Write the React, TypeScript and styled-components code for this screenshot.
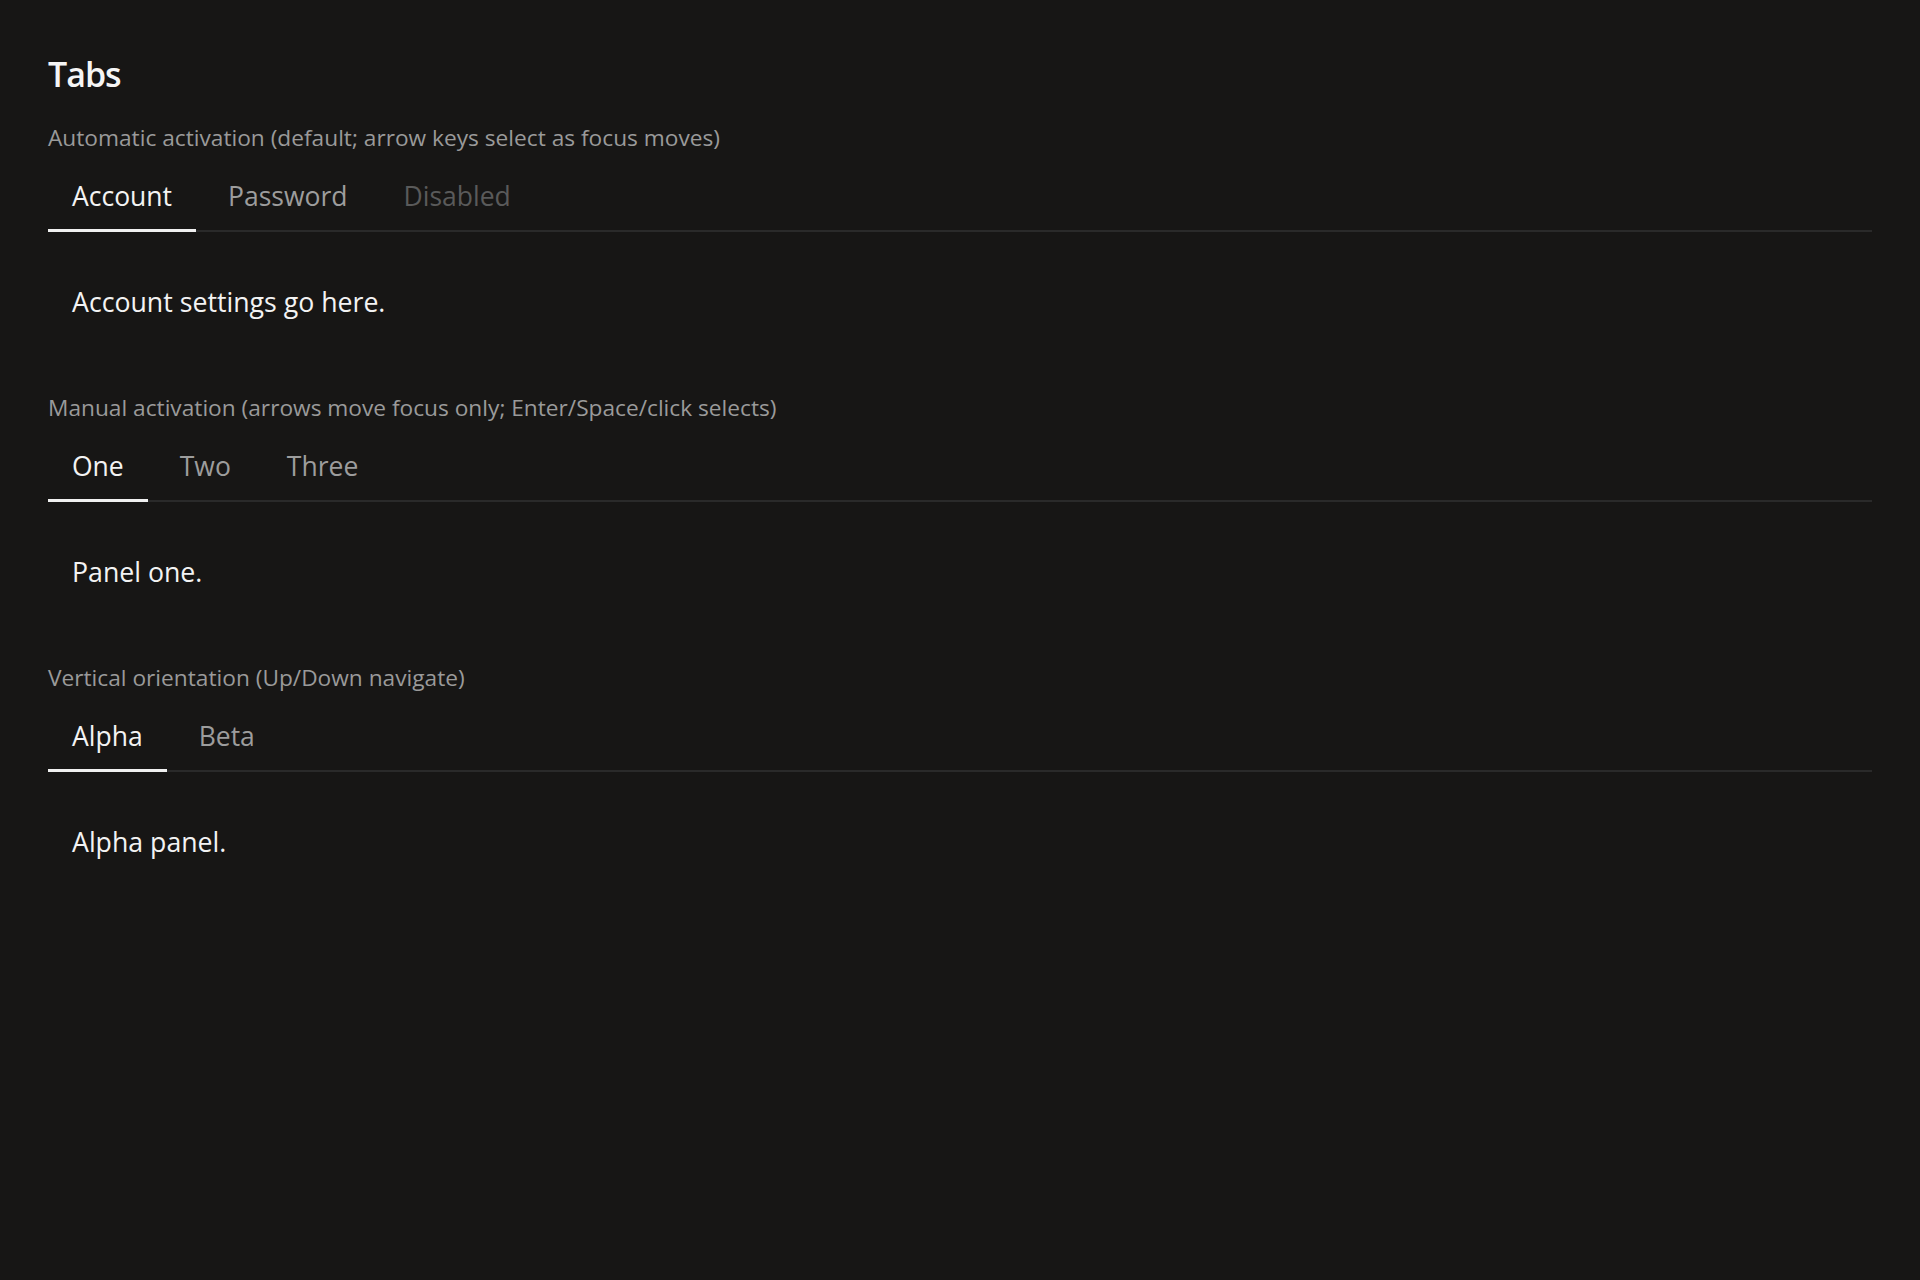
import { useState } from "react";
import styled, { createGlobalStyle } from "styled-components";
import * as Tabs from "@radix-ui/react-tabs";

type TabItem = { value: string; label: string; content: string; disabled?: boolean };

type Demo = {
  caption: string;
  manual?: boolean;
  vertical?: boolean;
  items: TabItem[];
};

const demos: Demo[] = [
  {
    caption: "Automatic activation (default; arrow keys select as focus moves)",
    items: [
      { value: "account", label: "Account", content: "Account settings go here." },
      { value: "password", label: "Password", content: "Change your password here." },
      { value: "disabled", label: "Disabled", content: "Unavailable.", disabled: true },
    ],
  },
  {
    caption: "Manual activation (arrows move focus only; Enter/Space/click selects)",
    manual: true,
    items: [
      { value: "one", label: "One", content: "Panel one." },
      { value: "two", label: "Two", content: "Panel two." },
      { value: "three", label: "Three", content: "Panel three." },
    ],
  },
  {
    caption: "Vertical orientation (Up/Down navigate)",
    vertical: true,
    items: [
      { value: "alpha", label: "Alpha", content: "Alpha panel." },
      { value: "beta", label: "Beta", content: "Beta panel." },
    ],
  },
];

const TabsDemo = ({ demo }: { demo: Demo }) => {
  const [value, setValue] = useState(demo.items[0].value);
  return (
    <Section>
      <Caption>{demo.caption}</Caption>
      <Tabs.Root
        value={value}
        onValueChange={setValue}
        activationMode={demo.manual ? "manual" : "automatic"}
        orientation={demo.vertical ? "vertical" : "horizontal"}
      >
        <TabList>
          {demo.items.map((item) => (
            <TabButton key={item.value} value={item.value} disabled={item.disabled}>
              {item.label}
            </TabButton>
          ))}
        </TabList>
        {demo.items.map((item) => (
          <Panel key={item.value} value={item.value}>
            {item.content}
          </Panel>
        ))}
      </Tabs.Root>
    </Section>
  );
};

const App = () => {
  return (
    <Page>
      <GlobalStyle />
      <Title>Tabs</Title>
      {demos.map((demo) => (
        <TabsDemo key={demo.caption} demo={demo} />
      ))}
    </Page>
  );
};

export default App;

const GlobalStyle = createGlobalStyle`
  html, body {
    margin: 0;
    background: #171615;
  }
  body {
    font-family: "Open Sans", "Noto Sans", sans-serif;
    color: #f3f3f3;
  }
  * {
    box-sizing: border-box;
  }
`;

const Page = styled.main`
  min-height: 1280px;
  padding: 54px 48px 48px;
  display: flex;
  flex-direction: column;
  gap: 47px;
`;

const Title = styled.h1`
  margin: 0 0 -18px;
  font-size: 34px;
  line-height: 40px;
  font-weight: 600;
  letter-spacing: -1px;
  color: #f5f5f5;
`;

const Section = styled.section`
  display: flex;
  flex-direction: column;
`;

const Caption = styled.p`
  margin: 0 0 12px;
  font-size: 22.7px;
  line-height: 29px;
  color: #9a9a9a;
`;

const TabList = styled(Tabs.List)`
  display: flex;
  gap: 8px;
  box-shadow: inset 0 -2px 0 #2a2a2a;
`;

const TabButton = styled(Tabs.Trigger)`
  appearance: none;
  background: transparent;
  border: none;
  border-bottom: 3px solid transparent;
  padding: 14px 24px 15px;
  font-family: inherit;
  font-size: 26.5px;
  line-height: 36px;
  color: #9d9d9d;
  cursor: pointer;

  &[data-state="active"] {
    color: #f3f3f3;
    border-bottom-color: #f0f0f0;
  }

  &[data-disabled] {
    color: #5a5a5a;
    cursor: default;
  }

  &:focus {
    outline: none;
  }
`;

const Panel = styled(Tabs.Content)`
  margin-top: 26px;
  padding: 24px;
  font-size: 26.7px;
  line-height: 1.5;
  color: #f3f3f3;

  &:focus {
    outline: none;
  }
`;
